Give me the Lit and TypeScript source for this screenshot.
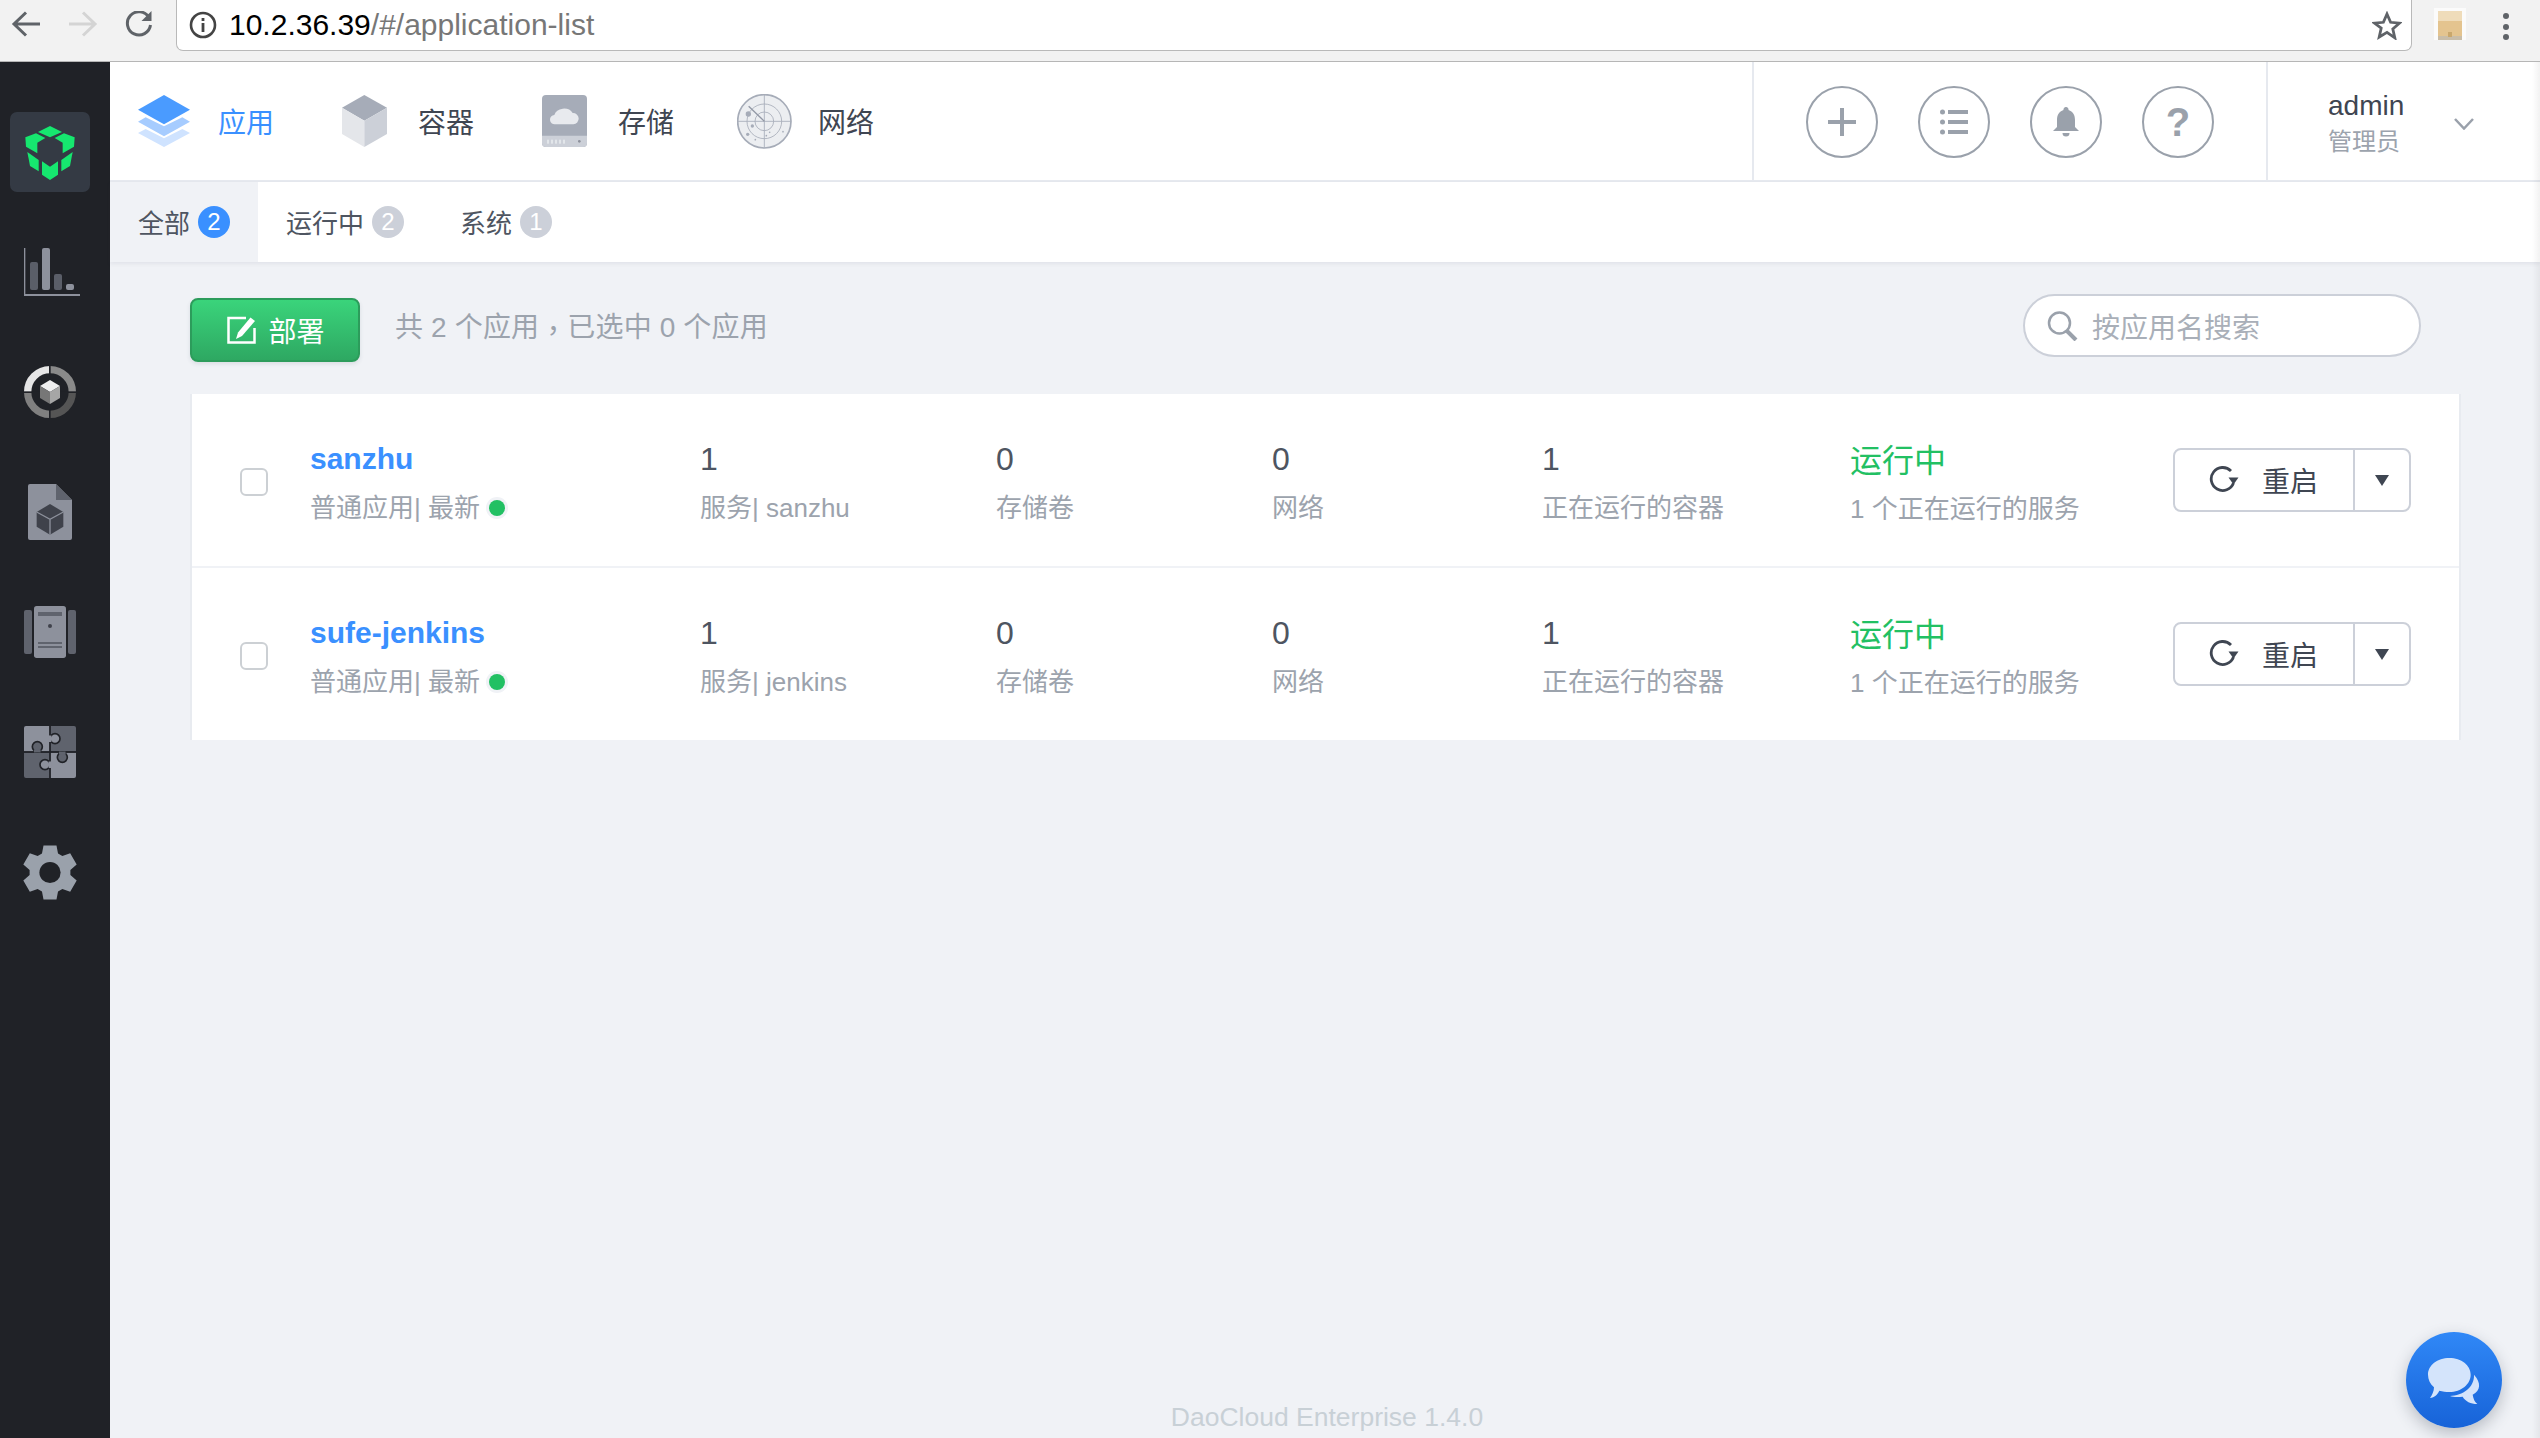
import { LitElement, html, css, svg } from "lit";
import { customElement } from "lit/decorators.js";

const gearPath = (() => {
  const cx = 150, cy = 1236, R = 84, r = 62;
  const pts: string[] = [];
  for (let i = 0; i < 6; i++) {
    const t = (-90 + i * 60) * Math.PI / 180;
    for (const [a, rad] of [[-23, r], [-13.5, R], [13.5, R], [23, r]] as [number, number][]) {
      const b = t + a * Math.PI / 180;
      pts.push(`${(cx + rad * Math.cos(b)).toFixed(1)},${(cy + rad * Math.sin(b)).toFixed(1)}`);
    }
  }
  return pts.join(" ");
})();

const icons = {
  back: svg`<svg width="30" height="26" viewBox="0 0 30 26"><path d="M15 1.5 3 13l12 11.5M3 13h26" fill="none" stroke="#5f6368" stroke-width="3"/></svg>`,
  fwd: svg`<svg width="30" height="26" viewBox="0 0 30 26"><path d="M15 1.5 27 13 15 24.5M27 13H1" fill="none" stroke="#d4d4d4" stroke-width="3"/></svg>`,
  reload: svg`<svg width="28" height="26" viewBox="0 0 28 26"><path d="M24 6.5A11.6 11.6 0 1 0 25.5 14" fill="none" stroke="#5f6368" stroke-width="3"/><path d="M26.5 0v10h-10z" fill="#5f6368"/></svg>`,
  info: svg`<svg width="28" height="28" viewBox="0 0 28 28"><circle cx="14" cy="14" r="12" fill="none" stroke="#444" stroke-width="2.6"/><rect x="12.6" y="12" width="2.8" height="9" fill="#444"/><rect x="12.6" y="7" width="2.8" height="3" fill="#444"/></svg>`,
  star: svg`<svg width="30" height="29" viewBox="0 0 30 29"><path d="M15 3l3.6 8.3 9 .8-6.8 5.9 2 8.8L15 21.3 7.2 26l2-8.8L2.400 12.100l9-.8z" fill="none" stroke="#5f6368" stroke-width="2.800"/></svg>`,
  ext: svg`<svg width="32" height="32" viewBox="0 0 32 32"><rect width="32" height="32" fill="#fbfbfb"/><path d="M4 3h11l3 3h10v22H4z" fill="#e4c48f"/><rect x="4" y="3" width="24" height="10" fill="#efdcba"/><rect x="4" y="28" width="24" height="4" fill="#c9bda8"/><rect x="14" y="24" width="4" height="5" fill="#c9a76c"/></svg>`,
  logo: svg`<svg width="80" height="80" viewBox="30 36 240 240" fill="#16e76f"><polygon points="150,78 186,96 150,112 114,96"/><polygon points="76,112 108,100 136,114 112,128 112,160 78,140"/><polygon points="224,112 192,100 164,114 188,128 188,160 222,140"/><polygon points="82,156 116,180 116,214 90,198"/><polygon points="218,156 184,180 184,214 210,198"/><polygon points="126,184 150,200 174,184 174,224 150,240 126,224"/></svg>`,
  chart: svg`<svg class="chart" width="56" height="48" viewBox="72 444 168 144"><rect x="72" y="444" width="4" height="144" fill="#8d919c"/><rect x="72" y="582" width="168" height="6" fill="#8d919c"/><rect x="90" y="486" width="24" height="84" rx="6" fill="#5a5e68"/><rect x="126" y="444" width="24" height="126" rx="6" fill="#8d919c"/><rect x="162" y="522" width="24" height="48" rx="6" fill="#5a5e68"/><rect x="198" y="552" width="24" height="18" rx="6" fill="#8d919c"/></svg>`,
  ring: svg`<svg width="52" height="52" viewBox="72 798 156 156"><g fill="none" stroke-width="22"><path d="M150 809A67 67 0 0 0 83 876" stroke="#e6e6e6"/><path d="M150 809A67 67 0 0 1 217 876" stroke="#8a8a8a"/><path d="M217 876A67 67 0 0 1 150 943" stroke="#555"/><path d="M150 943A67 67 0 0 1 83 876" stroke="#808080"/></g><rect x="147" y="798" width="5" height="156" fill="#202227"/><rect x="72" y="874" width="156" height="5" fill="#202227"/><polygon points="150,840 180,858 150,876 120,858" fill="#eee"/><polygon points="120,858 150,876 150,912 120,894" fill="#777"/><polygon points="180,858 150,876 150,912 180,894" fill="#a6a6a6"/></svg>`,
  doc: svg`<svg width="44" height="56" viewBox="84 72 132 168"><path d="M90 72h78l48 48v114a6 6 0 0 1-6 6H90a6 6 0 0 1-6-6V78a6 6 0 0 1 6-6z" fill="#8d919c"/><polygon points="168,72 216,120 168,120" fill="#5f636d"/><polygon points="150,132 190,156 190,200 150,224 110,200 110,156" fill="#3f424b"/><path d="M110 156l40 22 40-22M150 178v46" fill="none" stroke="#8d919c" stroke-width="4"/></svg>`,
  server: svg`<svg width="52" height="52" viewBox="72 438 156 156"><rect x="72" y="450" width="24" height="132" rx="6" fill="#5f636d"/><rect x="204" y="450" width="24" height="132" rx="6" fill="#5f636d"/><rect x="102" y="438" width="96" height="156" rx="8" fill="#8d919c"/><rect x="114" y="456" width="72" height="12" fill="#5f636d"/><circle cx="150" cy="498" r="6" fill="#3f424b"/><rect x="114" y="546" width="72" height="6" fill="#5f636d"/><rect x="114" y="558" width="72" height="6" fill="#5f636d"/></svg>`,
  puzzle: svg`<svg width="52" height="52" viewBox="72 798 156 156"><path d="M78 798h70v76H72V804a6 6 0 0 1 6-6z" fill="#8d919c"/><path d="M152 798h70a6 6 0 0 1 6 6v70h-76z" fill="#5f636d"/><path d="M72 878h76v76H78a6 6 0 0 1-6-6z" fill="#5f636d"/><path d="M152 878h76v70a6 6 0 0 1-6 6h-70z" fill="#8d919c"/><circle cx="165" cy="836" r="15" fill="#8d919c" stroke="#202227" stroke-width="5"/><rect x="146" y="826" width="8" height="20" fill="#8d919c"/><circle cx="112" cy="860" r="15" fill="#5f636d" stroke="#202227" stroke-width="5"/><rect x="102" y="868" width="20" height="9" fill="#5f636d"/><circle cx="187" cy="892" r="15" fill="#5f636d" stroke="#202227" stroke-width="5"/><rect x="177" y="875" width="20" height="9" fill="#5f636d"/><circle cx="135" cy="914" r="15" fill="#8d919c" stroke="#202227" stroke-width="5"/><rect x="146" y="904" width="8" height="20" fill="#8d919c"/><rect x="148" y="798" width="4" height="28" fill="#202227"/><rect x="148" y="846" width="4" height="58" fill="#202227"/><rect x="148" y="924" width="4" height="30" fill="#202227"/><rect x="72" y="874" width="30" height="4" fill="#202227"/><rect x="122" y="874" width="55" height="4" fill="#202227"/><rect x="197" y="874" width="31" height="4" fill="#202227"/></svg>`,
  gear: svg`<svg width="56" height="57" viewBox="66 1150 168 172"><polygon points="${gearPath}" fill="#9aa1ab"/><circle cx="150" cy="1236" r="32" fill="#202227"/></svg>`,
  layers: svg`<svg width="52" height="52" viewBox="54 78 156 156"><polygon points="54,192 77,180 132,208 187,180 210,192 132,234" fill="#cfe3ff"/><polygon points="54,158 77,145 132,172 187,145 210,158 132,202" fill="#a6ccff"/><polygon points="132,78 210,122 132,166 54,122" fill="#4a9bff"/></svg>`,
  cube: svg`<svg width="45" height="52" viewBox="665 78 135 156"><polygon points="732,78 800,116 732,155 665,116" fill="#a6acb8"/><polygon points="665,116 732,155 732,234 665,195" fill="#e4e6ea"/><polygon points="800,116 732,155 732,234 800,195" fill="#ccd0d8"/></svg>`,
  disk: svg`<svg width="45" height="52" viewBox="65 78 135 156"><rect x="65" y="78" width="135" height="156" rx="12" fill="#a6acb8"/><path d="M65 200h135v22a12 12 0 0 1-12 12H77a12 12 0 0 1-12-12z" fill="#ccd0d8"/><path d="M104 166a14 14 0 0 1-2-28 30 26 0 0 1 55-6 17 17 0 0 1 2 34z" fill="#e8eaee"/><g fill="#eef0f3"><rect x="81" y="212" width="4" height="12"/><rect x="93" y="212" width="4" height="12"/><rect x="105" y="212" width="4" height="12"/><rect x="117" y="212" width="4" height="12"/><rect x="129" y="212" width="4" height="12"/></g><circle cx="177" cy="217" r="4" fill="#8d919c"/></svg>`,
  radar: svg`<svg width="55" height="55" viewBox="650 73 165 165"><circle cx="732" cy="155" r="80" fill="#eceef1" stroke="#a6acb8" stroke-width="5"/><g fill="none" stroke="#a6acb8" stroke-width="2.500"><circle cx="732" cy="155" r="52"/><circle cx="732" cy="155" r="28"/><path d="M732 75v160M652 155h160"/></g><path d="M685 110l47 45" stroke="#9298a5" stroke-width="4"/><g fill="#a6acb8"><circle cx="684" cy="133" r="8"/><circle cx="696" cy="169" r="5"/><circle cx="682" cy="194" r="5"/><circle cx="705" cy="210" r="2.500"/><circle cx="738" cy="198" r="2.500"/><circle cx="748" cy="188" r="2.500"/><circle cx="788" cy="186" r="2.500"/></g></svg>`,
  plus: svg`<svg width="30" height="30" viewBox="0 0 30 30"><path d="M15 1v28M1 15h28" stroke="#9aa1ab" stroke-width="4"/></svg>`,
  list: svg`<svg width="28" height="26" viewBox="0 0 28 26"><g fill="#9aa1ab"><rect x="8" y="1" width="20" height="4"/><rect x="8" y="11" width="20" height="4"/><rect x="8" y="21" width="20" height="4"/><circle cx="2.500" cy="3" r="2.500"/><circle cx="2.500" cy="13" r="2.500"/><circle cx="2.500" cy="23" r="2.500"/></g></svg>`,
  bell: svg`<svg width="26" height="30" viewBox="0 0 26 30"><path d="M13 0a2.500 2.500 0 0 1 2.500 3C20 4.500 22 8 22 13v7l4 4H0l4-4v-7c0-5 2-8.500 6.500-10A2.500 2.500 0 0 1 13 0z" fill="#9aa1ab"/><path d="M9.500 26h7a3.500 3.500 0 0 1-7 0z" fill="#9aa1ab"/></svg>`,
  chev: svg`<svg width="20" height="12" viewBox="0 0 20 12"><path d="M1 1l9 9.500L19 1" fill="none" stroke="#9aa1ab" stroke-width="2.500"/></svg>`,
  search: svg`<svg width="32" height="30" viewBox="0 0 32 30"><circle cx="12.500" cy="12" r="10.500" fill="none" stroke="#9aa1ab" stroke-width="2.500"/><path d="M20 20l9 9" stroke="#9aa1ab" stroke-width="4"/></svg>`,
  edit: svg`<svg width="30" height="28" viewBox="0 0 30 28"><path d="M19 2H1.500v24.500h26V12" fill="none" stroke="#fff" stroke-width="2.500"/><path d="M23.500 1.500l4.500 3.500L15 20l-6 3 2-6.500z" fill="#fff"/></svg>`,
  restart: svg`<svg width="30" height="28" viewBox="0 0 30 28"><path d="M22 5A11.500 11.500 0 1 0 24.500 17" fill="none" stroke="#3f4652" stroke-width="2.800"/><path d="M19.500 11.500h10l-5 7z" fill="#3f4652"/></svg>`,
  chat: svg`<svg width="96" height="96" viewBox="198 96 288 288"><path d="M402 224c22 24 20 48-4 60 2 12 6 22 14 28-20 0-36-8-44-22-14 2-28 2-38-2 38-2 74-26 72-64z" fill="#d4e4fb"/><path d="M328 174c36 0 64 22 64 50s-28 52-64 52c-10 0-20-2-30-4-6 12-14 20-28 22 6-8 12-20 12-32-11-10-18-23-18-38 0-28 28-50 64-50z" fill="#d4e4fb"/></svg>`,
};

const apps = [
  { name: "sanzhu", service: "sanzhu" },
  { name: "sufe-jenkins", service: "jenkins" },
];

@customElement("app-root")
export class AppRoot extends LitElement {
  static styles = css`
    :host {
      display: flex;
      flex-direction: column;
      position: relative;
      width: 2540px;
      height: 1438px;
      overflow: hidden;
      background: #f0f2f6;
      color: #3f4652;
      font-family: "Liberation Sans", "Noto Sans CJK SC", sans-serif;
      font-weight: 400;
    }
    svg { display: block; flex: none; }

    /* browser chrome */
    .chrome {
      flex: none;
      height: 61px;
      box-sizing: content-box;
      border-bottom: 1px solid #b6b6b6;
      background: #f2f2f2;
      display: flex;
      align-items: flex-start;
    }
    .chrome-btns {
      width: 176px;
      height: 47px;
      padding-left: 11px;
      box-sizing: border-box;
      display: flex;
      align-items: center;
      gap: 27px;
    }
    .address {
      width: 2236px;
      height: 51px;
      box-sizing: border-box;
      background: #fff;
      border: 1.5px solid #b9b9b9;
      border-top: 0;
      border-radius: 0 0 7px 7px;
      display: flex;
      align-items: center;
      padding: 0 9px 0 12px;
    }
    .url { margin-left: 12px; font-size: 30px; color: #777; white-space: nowrap; }
    .url b { font-weight: 400; color: #000; }
    .address .grow { flex: 1; }
    .ext { margin: 8px 0 0 22px; }
    .dots { margin: 13px 0 0 37px; display: flex; flex-direction: column; gap: 4.500px; }
    .dots i { display: block; width: 6px; height: 6px; border-radius: 50%; background: #5f6368; }

    /* shell */
    .main { flex: 1; display: flex; min-height: 0; }
    .sidebar {
      flex: none;
      width: 110px;
      background: #202227;
      padding-top: 30px;
      box-sizing: border-box;
      display: flex;
      flex-direction: column;
    }
    .side-cell { width: 100px; height: 120px; display: flex; align-items: center; justify-content: center; }
    .side-cell .chart { margin-left: 4px; }
    .logo-box {
      width: 80px;
      height: 80px;
      border-radius: 7px;
      background: #343a44;
    }
    .content { flex: 1; min-width: 0; display: flex; flex-direction: column; position: relative; }

    /* top nav */
    .topnav {
      flex: none;
      height: 120px;
      box-sizing: border-box;
      background: #fff;
      border-bottom: 2px solid #e6e9ef;
      display: flex;
    }
    .nav { flex: 1; display: flex; align-items: center; padding: 0 0 0 26px; }
    .nav-item { width: 200px; flex: none; display: flex; align-items: center; font-size: 28px; color: #3f4652; }
    .nav-item.active { color: #3a90ff; }
    .nav-icon { width: 56px; height: 56px; display: flex; align-items: center; justify-content: center; margin-right: 26px; }
    .actions {
      width: 516px;
      flex: none;
      box-sizing: border-box;
      border-left: 2px solid #e6e9ef;
      border-right: 2px solid #e6e9ef;
      padding-top: 2px;
      display: flex;
      align-items: center;
      justify-content: center;
      gap: 40px;
    }
    .circle {
      width: 72px;
      height: 72px;
      box-sizing: border-box;
      border: 2px solid #9aa1ab;
      border-radius: 50%;
      display: flex;
      align-items: center;
      justify-content: center;
      color: #9aa1ab;
      font-size: 40px;
      font-weight: 700;
    }
    .user { flex: none; width: 272px; box-sizing: border-box; display: flex; align-items: center; padding: 5px 0 0 60px; }
    .user-text { width: 126px; }
    .user-name { font-size: 28px; line-height: 34px; color: #3f4652; }
    .user-role { font-size: 24px; line-height: 34px; color: #9ca3ad; margin-top: 2px; }

    /* tabs */
    .tabs {
      flex: none;
      height: 80px;
      background: #fff;
      display: flex;
      box-shadow: 0 2px 4px rgba(60, 70, 90, 0.08);
      font-size: 26px;
      color: #4e5561;
    }
    .tab { display: flex; align-items: center; gap: 8px; padding: 0 28px; }
    .tab-label { margin-top: -2px; }
    .tab.active { background: #f0f2f6; }
    .badge {
      width: 32px;
      height: 32px;
      border-radius: 50%;
      background: #ccd0d9;
      color: #fff;
      font-size: 24px;
      display: flex;
      align-items: center;
      justify-content: center;
    }
    .tab.active .badge { background: #3a90ff; }

    /* toolbar */
    .toolbar {
      flex: none;
      display: flex;
      align-items: center;
      height: 132px;
      padding: 0 119px 0 80px;
    }
    .deploy {
      width: 170px;
      height: 64px;
      margin-top: 4px;
      padding-left: 2px;
      box-sizing: border-box;
      border: 2px solid #2c9c5b;
      border-radius: 8px;
      background: linear-gradient(#3ad47b, #2ea862);
      color: #fff;
      font-size: 28px;
      display: flex;
      align-items: center;
      justify-content: center;
      gap: 11px;
      box-shadow: 0 2px 4px rgba(60, 70, 90, 0.12);
    }
    .summary { margin-left: 35px; font-size: 28px; line-height: 40px; color: #9ca3ad; flex: 1; letter-spacing: 0.15px; }
    .comma { font-family: "Noto Sans CJK TC", sans-serif; line-height: 0; vertical-align: -4px; }
    .searchbox {
      width: 398px;
      height: 63px;
      margin-top: -5px;
      box-sizing: border-box;
      border: 2px solid #ccd0d9;
      border-radius: 32px;
      background: #fff;
      display: flex;
      align-items: center;
      gap: 13px;
      padding-left: 22px;
      font-size: 28px;
      color: #a9afb8;
    }

    /* list */
    .list {
      flex: none;
      width: 2271px;
      margin-left: 80px;
      box-sizing: border-box;
      background: #fff;
      border-left: 2px solid #e8ebf0;
      border-right: 2px solid #e8ebf0;
    }
    .row {
      height: 172px;
      box-sizing: border-box;
      padding-left: 47px;
      display: grid;
      grid-template-columns: 71px 390px 296px 276px 270px 308px 323px 238px;
      align-items: center;
    }
    .row + .row { height: 174px; border-top: 2px solid #f0f2f6; }
    .cell { padding-top: 7px; }
    .check { width: 28px; height: 28px; box-sizing: border-box; border: 2px solid #ccd0d4; border-radius: 6px; background: #fff; margin: 3px 0 0 1px; }
    .name { font-size: 30px; line-height: 40px; font-weight: 700; color: #3a90ff; margin-top: -2px; }
    .num { font-size: 32px; line-height: 40px; color: #4e5561; margin-top: -2px; }
    .sub { font-size: 26px; line-height: 36px; color: #9ca3ad; margin-top: 11px; display: flex; align-items: center; white-space: nowrap; }
    .dot { width: 16px; height: 16px; border-radius: 50%; background: #22c063; margin-left: 9px; box-shadow: 0 0 0 3px #f0f2f6; }
    .status { font-size: 32px; line-height: 44px; color: #22c063; margin-top: -2px; }
    .status-sub { font-size: 26px; line-height: 36px; color: #9ca3ad; margin-top: 8px; white-space: nowrap; }
    .split {
      width: 238px;
      height: 64px;
      box-sizing: border-box;
      border: 2px solid #ccd0d9;
      border-radius: 8px;
      background: #fff;
      display: flex;
    }
    .split-main { width: 180px; box-sizing: border-box; display: flex; align-items: center; gap: 23px; padding-left: 34px; font-size: 28px; color: #3f4652; border-right: 2px solid #ccd0d9; }
    .split-caret { flex: 1; display: flex; align-items: center; justify-content: center; }
    .caret { width: 0; height: 0; border-left: 7.500px solid transparent; border-right: 7.500px solid transparent; border-top: 11px solid #3f4652; }

    .spacer { flex: 1; }
    .footer { flex: none; height: 36px; text-align: center; font-size: 26.500px; line-height: 30px; color: #c8d0d6; margin-left: 4px; }

    .chat {
      position: absolute;
      right: 38px;
      bottom: 10px;
      width: 96px;
      height: 96px;
      border-radius: 50%;
      background: linear-gradient(#3088f7, #1763d8);
      box-shadow: 0 6px 16px rgba(40, 50, 70, 0.28);
    }
    .edge {
      position: absolute;
      top: 62px;
      bottom: 0;
      right: 0;
      width: 8px;
      background: linear-gradient(to right, rgba(0, 0, 0, 0), rgba(0, 0, 0, 0.05));
      pointer-events: none;
    }
  `;

  render() {
    return html`
      <div class="chrome">
        <div class="chrome-btns">${icons.back}${icons.fwd}${icons.reload}</div>
        <div class="address">
          ${icons.info}
          <span class="url"><b>10.2.36.39</b>/#/application-list</span>
          <span class="grow"></span>
          ${icons.star}
        </div>
        <div class="ext">${icons.ext}</div>
        <div class="dots"><i></i><i></i><i></i></div>
      </div>
      <div class="main">
        <aside class="sidebar">
          <div class="side-cell"><div class="logo-box">${icons.logo}</div></div>
          <div class="side-cell">${icons.chart}</div>
          <div class="side-cell">${icons.ring}</div>
          <div class="side-cell">${icons.doc}</div>
          <div class="side-cell">${icons.server}</div>
          <div class="side-cell">${icons.puzzle}</div>
          <div class="side-cell">${icons.gear}</div>
        </aside>
        <div class="content">
          <header class="topnav">
            <nav class="nav">
              <div class="nav-item active"><span class="nav-icon">${icons.layers}</span>应用</div>
              <div class="nav-item"><span class="nav-icon">${icons.cube}</span>容器</div>
              <div class="nav-item"><span class="nav-icon">${icons.disk}</span>存储</div>
              <div class="nav-item"><span class="nav-icon">${icons.radar}</span>网络</div>
            </nav>
            <div class="actions">
              <div class="circle">${icons.plus}</div>
              <div class="circle">${icons.list}</div>
              <div class="circle">${icons.bell}</div>
              <div class="circle">?</div>
            </div>
            <div class="user">
              <div class="user-text">
                <div class="user-name">admin</div>
                <div class="user-role">管理员</div>
              </div>
              ${icons.chev}
            </div>
          </header>
          <div class="tabs">
            <div class="tab active"><span class="tab-label">全部</span><span class="badge">2</span></div>
            <div class="tab"><span class="tab-label">运行中</span><span class="badge">2</span></div>
            <div class="tab"><span class="tab-label">系统</span><span class="badge">1</span></div>
          </div>
          <div class="toolbar">
            <div class="deploy">${icons.edit}部署</div>
            <div class="summary">共 2 个应用<span class="comma">，</span>已选中 0 个应用</div>
            <div class="searchbox">${icons.search}按应用名搜索</div>
          </div>
          <div class="list">
            ${apps.map(
              (a) => html`
                <div class="row">
                  <div class="check"></div>
                  <div class="cell">
                    <div class="name">${a.name}</div>
                    <div class="sub">普通应用| 最新<span class="dot"></span></div>
                  </div>
                  <div class="cell"><div class="num">1</div><div class="sub">服务| ${a.service}</div></div>
                  <div class="cell"><div class="num">0</div><div class="sub">存储卷</div></div>
                  <div class="cell"><div class="num">0</div><div class="sub">网络</div></div>
                  <div class="cell"><div class="num">1</div><div class="sub">正在运行的容器</div></div>
                  <div class="cell"><div class="status">运行中</div><div class="status-sub">1 个正在运行的服务</div></div>
                  <div class="split">
                    <div class="split-main">${icons.restart}重启</div>
                    <div class="split-caret"><span class="caret"></span></div>
                  </div>
                </div>
              `
            )}
          </div>
          <div class="spacer"></div>
          <div class="footer">DaoCloud Enterprise 1.4.0</div>
          <div class="chat">${icons.chat}</div>
        </div>
      </div>
      <div class="edge"></div>
    `;
  }
}
